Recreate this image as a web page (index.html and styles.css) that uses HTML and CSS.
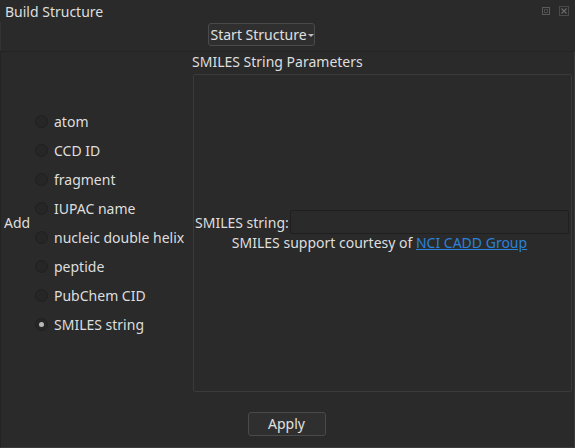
FILE: index.html
```html
<!DOCTYPE html>
<html>
<head>
<meta charset="utf-8">
<link rel="stylesheet" href="styles.css">
</head>
<body>
<div class="dock">
  <div class="titlebar">
    <span class="title">Build Structure</span>
    <span class="tb-buttons">
      <svg class="tb-icon" width="10" height="10" viewBox="0 0 10 10"><rect x="1.5" y="1.5" width="7" height="7" fill="none" stroke="#5a5a5a"/><rect x="3.5" y="3.5" width="3" height="3" fill="none" stroke="#4a4a4a"/></svg>
      <svg class="tb-icon" width="10" height="10" viewBox="0 0 10 10"><rect x="0.5" y="0.5" width="9" height="9" fill="none" stroke="#4a4a4a"/><path d="M2.5 2.5 L7.5 7.5 M7.5 2.5 L2.5 7.5" stroke="#6a6a6a" stroke-width="1.2"/></svg>
    </span>
  </div>
  <div class="toprow">
    <button class="combo">Start Structure<span class="arrow"></span></button>
  </div>
  <div class="frame">
    <div class="content">
      <div class="add">Add</div>
      <div class="radios">
        <div class="radio"><span class="dot"></span>atom</div>
        <div class="radio"><span class="dot"></span>CCD ID</div>
        <div class="radio"><span class="dot"></span>fragment</div>
        <div class="radio"><span class="dot"></span>IUPAC name</div>
        <div class="radio"><span class="dot"></span>nucleic double helix</div>
        <div class="radio"><span class="dot"></span>peptide</div>
        <div class="radio"><span class="dot"></span>PubChem CID</div>
        <div class="radio checked"><span class="dot"></span>SMILES string</div>
      </div>
      <div class="group">
        <div class="group-title">SMILES String Parameters</div>
        <div class="group-box">
          <div class="field-row">
            <label class="field-label">SMILES string:</label>
            <div class="field-input"></div>
          </div>
          <div class="credit">SMILES support courtesy of <a href="#" class="link">NCI CADD Group</a></div>
        </div>
      </div>
    </div>
    <div class="footer">
      <button class="btn">Apply</button>
    </div>
  </div>
</div>
</body>
</html>
```
FILE: styles.css
```css
* { box-sizing: border-box; }
html, body { margin: 0; padding: 0; background: #2a2a2a; }
body {
  font-family: "Noto Sans", "DejaVu Sans", sans-serif;
  font-size: 13px;
  color: #dedede;
  width: 575px;
  height: 448px;
  overflow: hidden;
}
.dock { width: 575px; height: 448px; display: flex; flex-direction: column; }
.titlebar {
  height: 22px;
  display: flex;
  align-items: center;
  justify-content: space-between;
  padding: 0 6px 0 5px;
  font-size: 14px;
}
.tb-buttons { display: flex; gap: 8px; align-items: center; }
.tb-icon { display: block; }
.toprow {
  height: 29px;
  display: flex;
  justify-content: center;
  align-items: flex-start;
  padding-top: 1px;
  border-left: 1px solid #333;
}
.combo {
  height: 23px;
  width: 107px;
  margin-right: 54px;
  background: #2f2f2f;
  border: 1px solid #4a4a4a;
  border-radius: 3px;
  color: #e0e0e0;
  font: inherit;
  font-size: 14px;
  padding: 0 0 0 2px;
  display: flex;
  align-items: center;
  white-space: nowrap;
}
.arrow {
  display: inline-block;
  width: 0; height: 0;
  border-left: 3px solid transparent;
  border-right: 3px solid transparent;
  border-top: 3px solid #bbb;
  margin-left: 1px;
  margin-top: 1px;
}
.frame {
  flex: 1;
  border: 1px solid #232323;
  border-right-color: #3a3a3a;
  border-bottom-color: #3a3a3a;
  display: flex;
  flex-direction: column;
}
.content {
  height: 340px;
  display: flex;
}
.add {
  width: 34px;
  padding-left: 3px;
  align-self: center;
  font-size: 14px;
  margin-top: 0;
}
.radios {
  width: 157px;
  display: flex;
  flex-direction: column;
  justify-content: center;
  padding-top: 1px;
}
.radio {
  height: 29px;
  display: flex;
  align-items: center;
  font-size: 14px;
  white-space: nowrap;
}
.dot {
  width: 13px; height: 13px;
  border-radius: 50%;
  background: #262626;
  border: 1px solid #202020;
  margin-right: 6px;
  flex: none;
  position: relative;
}
.radio.checked .dot::after {
  content: "";
  position: absolute;
  left: 3px; top: 3px;
  width: 5px; height: 5px;
  border-radius: 50%;
  background: #b8b8b8;
}
.group {
  flex: 1;
  display: flex;
  flex-direction: column;
  padding-right: 2px;
}
.group-title {
  height: 22px;
  line-height: 20px;
  font-size: 14px;
}
.group-box {
  flex: 1;
  margin-left: 1px;
  border: 1px solid #3a3a3a;
  border-radius: 2px;
  display: flex;
  flex-direction: column;
  justify-content: center;
  padding-bottom: 4px;
}
.field-row {
  display: flex;
  align-items: center;
  height: 24px;
}
.field-label { font-size: 14px; padding-left: 1px; width: 96px; white-space: nowrap; }
.field-input {
  width: 279px;
  height: 24px;
  background: #2a2a2a;
  border: 1px solid #1f1f1f;
  border-radius: 2px;
}
.credit {
  font-size: 14px;
  text-align: center;
  line-height: 18px;
  padding-right: 6px;
}
.link { color: #2a82da; text-decoration: underline; }
.footer {
  flex: 1;
  display: flex;
  justify-content: center;
  align-items: center;
  padding-top: 8px;
}
.btn {
  width: 78px;
  height: 24px;
  margin-right: 2px;
  background: #2f2f2f;
  border: 1px solid #4a4a4a;
  border-radius: 3px;
  color: #e0e0e0;
  font: inherit;
  font-size: 14px;
  padding: 0;
}
```
